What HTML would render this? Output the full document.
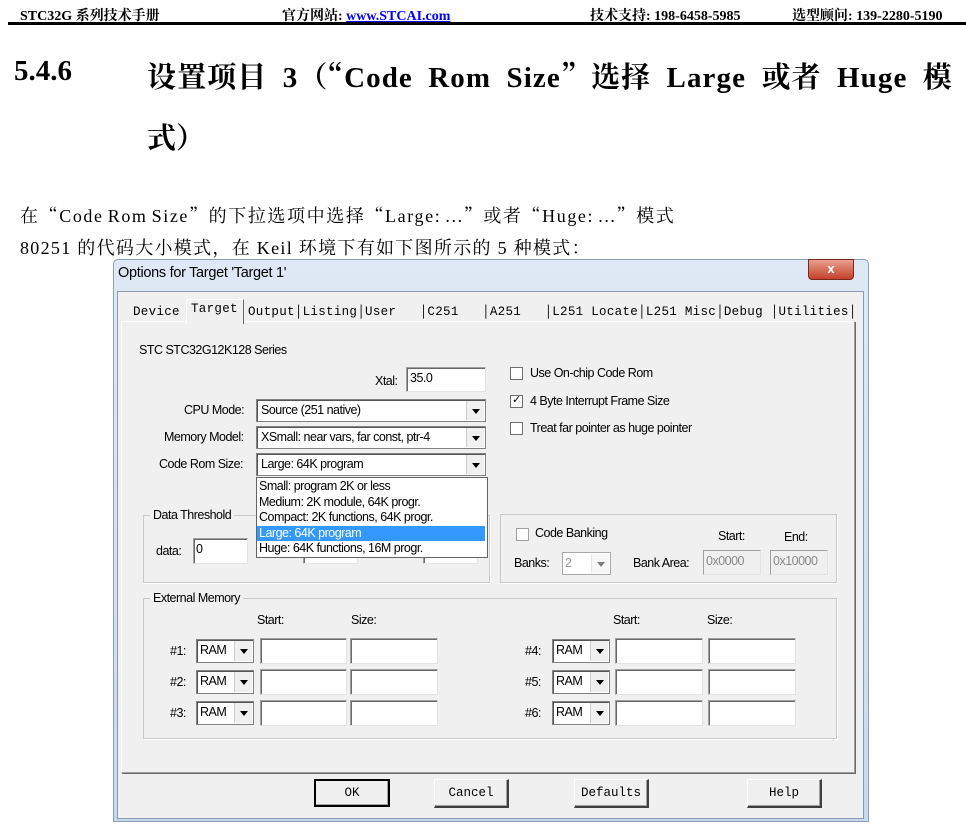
<!DOCTYPE html>
<html><head><meta charset="utf-8"><style>
body{margin:0;width:966px;height:825px;background:#fff;position:relative;overflow:hidden;font-family:"Liberation Serif","Noto Serif CJK SC",serif;}
.a{position:absolute;white-space:nowrap;}
.hd{font-weight:bold;font-size:14px;top:5px;}
.q{font-family:"Noto Serif CJK SC",serif;}
.d{font-family:"Liberation Sans",sans-serif;font-size:12.5px;letter-spacing:-0.5px;color:#000;}
.m{font-family:"Liberation Mono",monospace;font-size:12.5px;letter-spacing:0.3px;}
.in{position:absolute;background:#fff;border:1px solid #a0a0a0;border-right-color:#e3e3e3;border-bottom-color:#e3e3e3;box-shadow:inset 1px 1px 0 #696969;}
.cb{position:absolute;background:#fff;border:1px solid #828282;box-shadow:inset 1px 1px 0 #555;}
.ar{position:absolute;right:1px;top:1px;bottom:1px;width:17px;background:#f0f0f0;border-left:1px solid #ccc;}
.ar:after{content:"";position:absolute;left:5px;top:50%;margin-top:-2px;border-left:4px solid transparent;border-right:4px solid transparent;border-top:5px solid #000;}
.chk{position:absolute;width:11px;height:11px;border:1px solid #707070;background:#fff;}
.grp{position:absolute;border:1px solid #c8c8c8;box-shadow:1px 1px 0 #fff;}
.btn{position:absolute;height:26px;background:#f0f0f0;border:1px solid #fff;border-right:2px solid #404040;border-bottom:2px solid #404040;box-shadow:inset -1px -1px 0 #a0a0a0;text-align:center;line-height:26px;font-family:"Liberation Mono",monospace;font-size:12.5px;}
</style></head><body>
<div class="a hd" style="left:20px">STC32G 系列技术手册</div>
<div class="a hd" style="left:282px">官方网站: <span style="color:#00f;text-decoration:underline">www.STCAI.com</span></div>
<div class="a hd" style="left:590px">技术支持: 198-6458-5985</div>
<div class="a hd" style="left:792px">选型顾问: 139-2280-5190</div>
<div class="a" style="left:8px;top:22px;width:958px;height:3px;background:#000"></div>
<div class="a" style="left:14px;top:55px;font-size:29px;font-weight:bold">5.4.6</div>
<div class="a" style="left:147px;top:55px;font-size:29px;font-weight:bold;word-spacing:7px;letter-spacing:1.1px">设置项目 3<span class="q">（“</span>Code Rom Size<span class="q">”</span>选择 Large 或者 Huge 模</div>
<div class="a" style="left:147px;top:116px;font-size:29px;font-weight:bold">式<span class="q">）</span></div>
<div class="a" style="left:20px;top:202px;font-size:18px;letter-spacing:1.6px;word-spacing:-2px">在<span class="q">“</span>Code Rom Size<span class="q">”</span>的下拉选项中选择<span class="q">“</span>Large: ...<span class="q">”</span>或者<span class="q">“</span>Huge: ...<span class="q">”</span>模式</div>
<div class="a" style="left:20px;top:234px;font-size:18px;letter-spacing:1.3px">80251 的代码大小模式，在 Keil 环境下有如下图所示的 5 种模式：</div>

<div class="a" style="left:113px;top:259px;width:754px;height:561px;background:linear-gradient(#dfe9f5,#c9d9ec);border:1px solid #8aa0bb;border-radius:5px 5px 0 0"></div>
<div class="a d" style="left:118px;top:265px;font-size:14.5px;letter-spacing:-0.3px">Options for Target 'Target 1'</div>
<div class="a" style="left:808px;top:259px;width:44px;height:19px;background:linear-gradient(#e8a08e,#c4402a);border:1px solid #7a2a1c;border-radius:0 0 4px 4px;color:#fff;font:bold 13px 'Liberation Sans';text-align:center;line-height:18px">x</div>
<div class="a" style="left:117px;top:291px;width:745px;height:526px;background:#f0f0f0;border:1px solid #8a9bb0"></div>
<div class="a" style="left:121px;top:321px;width:732px;height:450px;border:1px solid #fff;border-right-color:#a0a0a0;border-bottom-color:#a0a0a0;box-shadow:1px 1px 0 #696969"></div>
<div class="a" style="left:186px;top:299px;width:56px;height:24px;background:#f0f0f0;border:1px solid #fff;border-bottom:none;border-right:1px solid #696969"></div>
<div class="a m" style="left:133px;top:305px">Device</div>
<div class="a m" style="left:191px;top:302px">Target</div>
<div class="a m" style="left:248px;top:305px">Output│Listing│User &nbsp;&nbsp;│C251 &nbsp;&nbsp;│A251 &nbsp;&nbsp;│L251 Locate│L251 Misc│Debug │Utilities│</div>
<div class="a d" style="left:139px;top:343px">STC STC32G12K128 Series</div>
<div class="a d" style="left:375px;top:374px">Xtal:</div>
<div class="in" style="left:406px;top:367px;width:78px;height:23px"><span class="d" style="position:absolute;left:3px;top:3px">35.0</span></div>
<div class="a d" style="left:184px;top:403px">CPU Mode:</div>
<div class="cb" style="left:256px;top:399px;width:228px;height:21px"><span class="d" style="position:absolute;left:4px;top:3px">Source (251 native)</span><div class="ar"></div></div>
<div class="a d" style="left:164px;top:430px">Memory Model:</div>
<div class="cb" style="left:256px;top:426px;width:228px;height:21px"><span class="d" style="position:absolute;left:4px;top:3px">XSmall: near vars, far const, ptr-4</span><div class="ar"></div></div>
<div class="a d" style="left:159px;top:457px">Code Rom Size:</div>
<div class="cb" style="left:256px;top:453px;width:228px;height:21px"><span class="d" style="position:absolute;left:4px;top:3px">Large: 64K program</span><div class="ar"></div></div>
<div class="chk" style="left:510px;top:367px"></div><div class="a d" style="left:530px;top:366px">Use On-chip Code Rom</div>
<div class="chk" style="left:510px;top:395px"><span style="position:absolute;left:1px;top:-3px;font:bold 11px 'DejaVu Sans'">✓</span></div><div class="a d" style="left:530px;top:394px">4 Byte Interrupt Frame Size</div>
<div class="chk" style="left:510px;top:422px"></div><div class="a d" style="left:530px;top:421px">Treat far pointer as huge pointer</div>
<div class="grp" style="left:143px;top:515px;width:345px;height:66px"></div>
<div class="a d" style="left:150px;top:508px;background:#f0f0f0;padding:0 3px">Data Threshold</div>
<div class="a d" style="left:156px;top:544px">data:</div>
<div class="in" style="left:193px;top:538px;width:53px;height:24px"><span class="d" style="position:absolute;left:2px;top:3px">0</span></div>
<div class="in" style="left:303px;top:538px;width:53px;height:24px"></div>
<div class="in" style="left:423px;top:538px;width:53px;height:24px"></div>
<div class="a" style="left:256px;top:477px;width:230px;height:79px;background:#fff;border:1px solid #646464"></div>
<div class="a d" style="left:259px;top:479px;line-height:15.6px">Small: program 2K or less<br>Medium: 2K module, 64K progr.<br>Compact: 2K functions, 64K progr.<br><span style="display:inline-block;width:226px;margin-left:-2px;padding-left:2px;background:#3399ff;color:#fff">Large: 64K program</span><br>Huge: 64K functions, 16M progr.</div>
<div class="grp" style="left:500px;top:514px;width:335px;height:67px"></div>
<div class="chk" style="left:516px;top:528px;border-color:#a0a0a0"></div><div class="a d" style="left:535px;top:526px">Code Banking</div>
<div class="a d" style="left:718px;top:529px">Start:</div><div class="a d" style="left:784px;top:530px">End:</div>
<div class="a d" style="left:514px;top:556px">Banks:</div>
<div class="cb" style="left:562px;top:552px;width:47px;height:21px;border-color:#aaa;box-shadow:none"><span class="d" style="position:absolute;left:2px;top:3px;color:#999">2</span><div class="ar" style="opacity:.5"></div></div>
<div class="a d" style="left:633px;top:556px">Bank Area:</div>
<div class="in" style="left:703px;top:550px;width:56px;height:23px;background:#f0f0f0;box-shadow:none"><span class="d" style="position:absolute;left:2px;top:3px;color:#888">0x0000</span></div>
<div class="in" style="left:770px;top:550px;width:56px;height:23px;background:#f0f0f0;box-shadow:none"><span class="d" style="position:absolute;left:2px;top:3px;color:#888">0x10000</span></div>
<div class="grp" style="left:143px;top:598px;width:692px;height:139px"></div>
<div class="a d" style="left:150px;top:591px;background:#f0f0f0;padding:0 3px">External Memory</div>
<div class="a d" style="left:257px;top:613px">Start:</div><div class="a d" style="left:351px;top:613px">Size:</div>
<div class="a d" style="left:613px;top:613px">Start:</div><div class="a d" style="left:707px;top:613px">Size:</div>
<div class="a d" style="left:170px;top:644px">#1:</div><div class="cb" style="left:196px;top:639px;width:56px;height:22px"><span class="d" style="position:absolute;left:3px;top:3px">RAM</span><div class="ar"></div></div><div class="in" style="left:260px;top:638px;width:85px;height:24px"></div><div class="in" style="left:350px;top:638px;width:86px;height:24px"></div>
<div class="a d" style="left:170px;top:675px">#2:</div><div class="cb" style="left:196px;top:670px;width:56px;height:22px"><span class="d" style="position:absolute;left:3px;top:3px">RAM</span><div class="ar"></div></div><div class="in" style="left:260px;top:669px;width:85px;height:24px"></div><div class="in" style="left:350px;top:669px;width:86px;height:24px"></div>
<div class="a d" style="left:170px;top:706px">#3:</div><div class="cb" style="left:196px;top:701px;width:56px;height:22px"><span class="d" style="position:absolute;left:3px;top:3px">RAM</span><div class="ar"></div></div><div class="in" style="left:260px;top:700px;width:85px;height:24px"></div><div class="in" style="left:350px;top:700px;width:86px;height:24px"></div>
<div class="a d" style="left:525px;top:644px">#4:</div><div class="cb" style="left:552px;top:639px;width:56px;height:22px"><span class="d" style="position:absolute;left:3px;top:3px">RAM</span><div class="ar"></div></div><div class="in" style="left:615px;top:638px;width:86px;height:24px"></div><div class="in" style="left:708px;top:638px;width:86px;height:24px"></div>
<div class="a d" style="left:525px;top:675px">#5:</div><div class="cb" style="left:552px;top:670px;width:56px;height:22px"><span class="d" style="position:absolute;left:3px;top:3px">RAM</span><div class="ar"></div></div><div class="in" style="left:615px;top:669px;width:86px;height:24px"></div><div class="in" style="left:708px;top:669px;width:86px;height:24px"></div>
<div class="a d" style="left:525px;top:706px">#6:</div><div class="cb" style="left:552px;top:701px;width:56px;height:22px"><span class="d" style="position:absolute;left:3px;top:3px">RAM</span><div class="ar"></div></div><div class="in" style="left:615px;top:700px;width:86px;height:24px"></div><div class="in" style="left:708px;top:700px;width:86px;height:24px"></div>
<div class="btn" style="left:314px;top:779px;width:72px;border:2px solid #000;height:24px;line-height:24px">OK</div>
<div class="btn" style="left:434px;top:779px;width:72px">Cancel</div>
<div class="btn" style="left:574px;top:779px;width:72px">Defaults</div>
<div class="btn" style="left:747px;top:779px;width:72px">Help</div>
</body></html>
